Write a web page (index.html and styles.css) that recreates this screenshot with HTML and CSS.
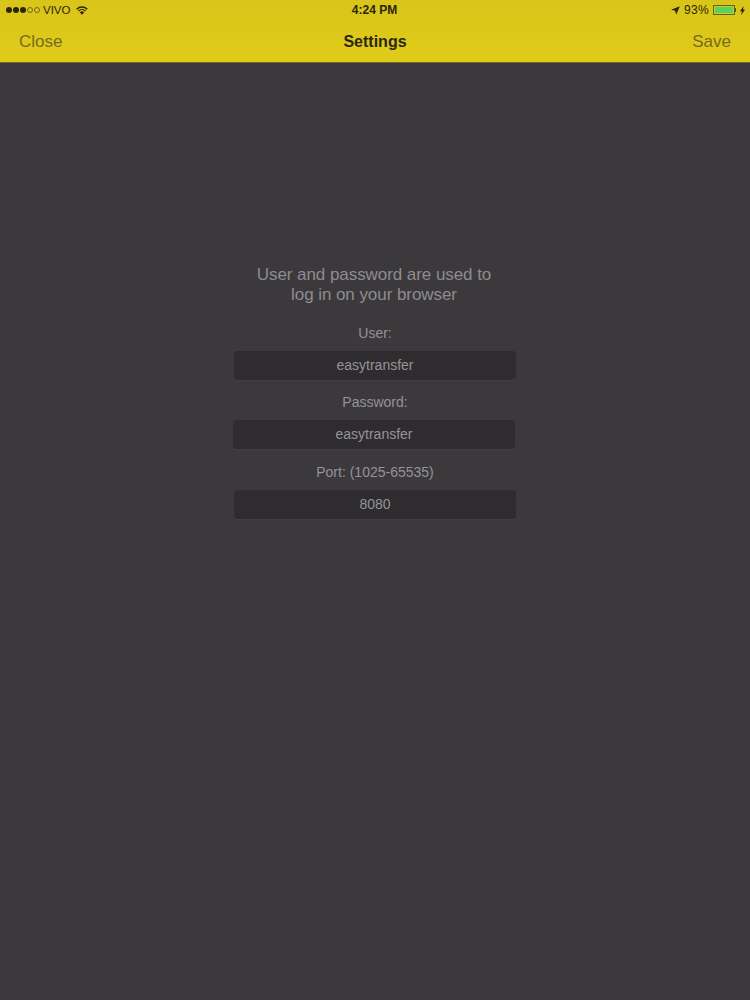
FILE: index.html
```html
<!DOCTYPE html>
<html>
<head>
  <title>Settings</title>
  <link rel="stylesheet" href="styles.css">
</head>
<body>
  <header class="topbar">
    <div class="status-bar">
      <div class="status-left">
        <span class="signal">
          <i class="dot"></i><i class="dot"></i><i class="dot"></i><i class="dot empty"></i><i class="dot empty"></i>
        </span>
        <span class="carrier">VIVO</span>
        <svg class="wifi" width="12" height="9" viewBox="0 0 13 10">
          <path d="M0.6 3.6 A8.4 8.4 0 0 1 12.4 3.6" fill="none" stroke="#2a2508" stroke-width="1.6"/>
          <path d="M2.6 5.6 A5.6 5.6 0 0 1 10.4 5.6" fill="none" stroke="#2a2508" stroke-width="1.6"/>
          <path d="M4.1 7.1 A3.3 3.3 0 0 1 8.9 7.1 L6.5 9.8 Z" fill="#2a2508"/>
        </svg>
      </div>
      <div class="status-time">4:24 PM</div>
      <div class="status-right">
        <svg class="arrow" width="9" height="9" viewBox="0 0 9 9">
          <path d="M8.8 0.2 L0.2 3.8 L4.2 4.8 L5.2 8.8 Z" fill="#2a2508"/>
        </svg>
        <span class="percent">93%</span>
        <span class="battery"><span class="battery-fill"></span></span>
        <span class="battery-tip"></span>
        <svg class="bolt" width="5" height="9" viewBox="0 0 5 9">
          <path d="M3.6 0 L0 5.2 L1.9 5.2 L1.3 9 L5 3.6 L3 3.6 Z" fill="#2a2508"/>
        </svg>
      </div>
    </div>
    <nav class="navbar">
      <a class="nav-btn">Close</a>
      <h1 class="nav-title">Settings</h1>
      <a class="nav-btn save">Save</a>
    </nav>
  </header>

  <main class="content">
    <p class="intro">User and password are used to<br>log in on your browser</p>
    <form class="settings-form">
      <label class="field-label">User:</label>
      <div class="field">easytransfer</div>
      <label class="field-label">Password:</label>
      <div class="field shifted">easytransfer</div>
      <label class="field-label">Port: (1025-65535)</label>
      <div class="field">8080</div>
    </form>
  </main>
</body>
</html>
```

FILE: styles.css
```css
html, body {
  height: 100%;
}

body {
  margin: 0;
  background-color: #3b393c;
  font-family: "Liberation Sans", Arial, sans-serif;
  display: flex;
  flex-direction: column;
}

.topbar {
  height: 62px;
  background: linear-gradient(#d9c41a, #e1cb19);
  border-bottom: 1px solid #6f6a2a;
  flex-shrink: 0;
}

.status-bar {
  height: 20px;
  padding: 0 6px 0 6px;
  display: grid;
  grid-template-columns: 1fr auto 1fr;
  align-items: center;
  color: #2a2508;
  font-size: 12px;
}

.status-left {
  display: flex;
  align-items: center;
}

.signal {
  display: flex;
  gap: 1px;
  margin-right: 3px;
}

.dot {
  width: 6px;
  height: 6px;
  border-radius: 50%;
  background-color: #2a2508;
  box-sizing: border-box;
}

.dot.empty {
  background: none;
  border: 1px solid #6f6a20;
}

.carrier {
  font-size: 11.5px;
}

.wifi {
  margin-left: 6px;
}

.status-time {
  font-weight: bold;
  padding-right: 1px;
}

.status-right {
  display: flex;
  align-items: center;
  justify-content: flex-end;
  margin-right: -1px;
}

.arrow {
  margin-right: 4px;
}

.percent {
  margin-right: 4px;
  letter-spacing: 0.3px;
}

.battery {
  width: 22px;
  height: 10px;
  border: 1px solid #5a6a20;
  box-sizing: border-box;
  padding: 1px;
  display: flex;
}

.battery-fill {
  width: 100%;
  background-color: #55d465;
}

.battery-tip {
  width: 1px;
  height: 4px;
  background-color: #4d5a1a;
  margin-right: 4px;
}

.navbar {
  height: 40px;
  padding: 2px 19px 0;
  display: flex;
  align-items: center;
}

.nav-btn {
  flex: 1;
  font-size: 17px;
  color: #756b1e;
}

.nav-btn.save {
  text-align: right;
}

.nav-title {
  margin: 0;
  font-size: 16px;
  font-weight: bold;
  color: #2a2812;
}

.content {
  flex: 1;
  padding-top: 202px;
  text-align: center;
}

.intro {
  margin: 0 0 18px;
  padding-right: 2px;
  font-size: 17px;
  line-height: 20px;
  letter-spacing: -0.06px;
  color: #8e8c8f;
}

.settings-form {
  width: 282px;
  margin: 0 auto;
  display: flex;
  flex-direction: column;
}

.field-label {
  font-size: 14px;
  line-height: 20px;
  color: #959396;
  margin-bottom: 8px;
}

.field {
  height: 29px;
  line-height: 29px;
  margin-bottom: 12px;
  font-size: 14px;
  color: #959396;
  background-color: #2e2c2f;
  border-radius: 4px;
  box-shadow: 0 1px 1px rgba(70, 68, 71, 0.6);
}

.field.shifted {
  margin: 0 1px 13px -1px;
}
```
